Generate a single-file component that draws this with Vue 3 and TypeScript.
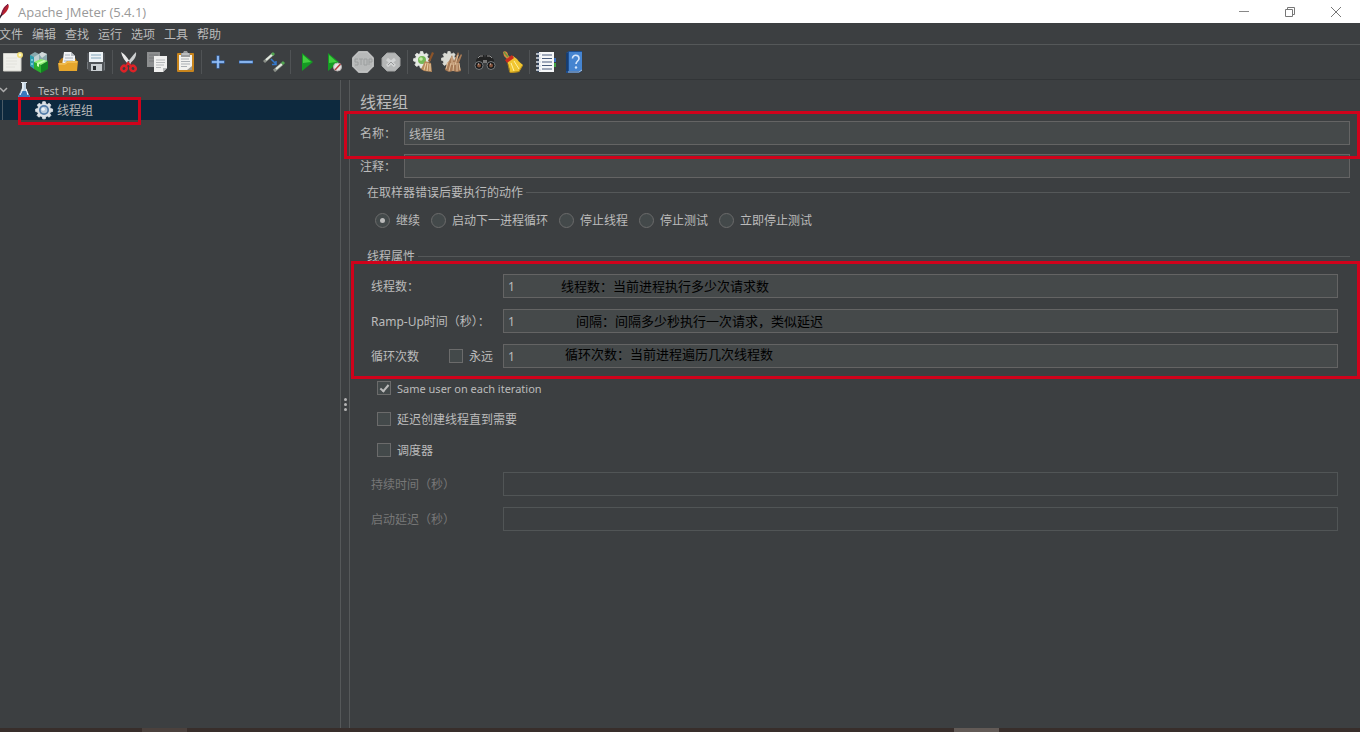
<script setup lang="ts">
import { ref } from 'vue'

interface Tool {
  label: string
  art: string
}

const menus = ['文件', '编辑', '查找', '运行', '选项', '工具', '帮助']

const gear =
  '<path d="M10.500 2h3l.6 2.600 1.800.8 2.300-1.400 2.100 2.100-1.400 2.300.8 1.800 2.600.6v3l-2.600.6-.8 1.800 1.400 2.300-2.100 2.100-2.300-1.400-1.800.8-.6 2.600h-3l-.6-2.600-1.800-.8-2.300 1.400-2.100-2.100 1.400-2.300-.8-1.800L2 13.800v-3l2.600-.6.8-1.800L4 6.100 6.100 4l2.300 1.400 1.800-.8z"/>'

const toolGroups: Tool[][] = [
  [
    {
      label: '新建',
      art: '<path d="M3.500 3.500h17.500V21h-17.500z" fill="#efefea" stroke="#d2d2cc"/><path d="M6 8h11M6 11h11M6 14h11M6 17h9" stroke="#e2e2dc"/><circle cx="20" cy="5" r="3" fill="#f2df79"/><circle cx="20" cy="5" r="1.400" fill="#fffbd0"/>'
    },
    {
      label: '模板',
      art: '<path d="M2 5l5-3 4 2 3-2 5 2v8l-9 6-8-4z" fill="#8aa9ad"/><path d="M2 5l4 2v12l-4-3z" fill="#2f9fae"/><path d="M6 7l5-3v6l-5 3z" fill="#c0d0d0"/><path d="M11 4l3-2 5 2-5 4z" fill="#d3dada"/><path d="M4 9v8" stroke="#bdf3f6" stroke-dasharray="2 2"/><path d="M6 12l7-3 7 2-7 4z" fill="#8cf06c"/><path d="M6 12l7 3v8l-7-4z" fill="#2bb02e"/><path d="M13 15l7-4v8l-7 4z" fill="#128420"/><path d="M9 13l7-3 2 1-7 3v3l-2-1z" fill="#c9ffb4"/>'
    },
    {
      label: '打开',
      art: '<path d="M3 11l3-3h13l2 3v9H3z" fill="#b97a16"/><path d="M8 2h7l4 4v10H6z" fill="#f1f3f5"/><path d="M15 2v4h4z" fill="#b9bec4"/><path d="M9 5h5M9 8h8M8 11h9" stroke="#a8b2bd"/><path d="M2 13h7l2-2h11l-1 10H3z" fill="#e6a62c"/><path d="M3 14h6.500l2-2H21" stroke="#f8cf70" fill="none"/>'
    },
    {
      label: '保存',
      art: '<path d="M3 3h18v18H5l-2-2z" fill="#505458"/><path d="M5 2h14v10H5z" fill="#eef3f6"/><path d="M7 5h10M7 8h10" stroke="#83a6bb"/><path d="M7 14h11v7H7z" fill="#c9ced1"/><path d="M9 16h3v4H9z" fill="#282c2f"/><path d="M3.500 12v7M20.500 12v8" stroke="#73787c"/>'
    }
  ],
  [
    {
      label: '剪切',
      art: '<path d="M4 2c1 5 4 9 8 13l2-2C11 9 8 4 4 2z" fill="#e8e8e8"/><path d="M19 2c1 5-3 9-8 13l-1-2c3-4 6-8 9-11z" fill="#cccfd0"/><circle cx="11.500" cy="12" r="1" fill="#555"/><ellipse cx="7" cy="18.500" rx="2.600" ry="2.800" transform="rotate(35 7 18.500)" fill="none" stroke="#dc2227" stroke-width="2.400"/><ellipse cx="16" cy="18.500" rx="2.600" ry="2.800" transform="rotate(-35 16 18.500)" fill="none" stroke="#dc2227" stroke-width="2.400"/><path d="M9 16l2-3 3 3" fill="none" stroke="#dc2227" stroke-width="2"/>'
    },
    {
      label: '复制',
      art: '<path d="M2 2h13v15H2z" fill="#8d8f90"/><path d="M4 5h9M4 8h9M4 11h9" stroke="#747778"/><path d="M9 6h13v12l-4 4H9z" fill="#f0f0ef"/><path d="M22 18h-4v4z" fill="#b7b9ba"/><path d="M11 10h9M11 12.500h9M11 15h8M11 17.500h5" stroke="#b5b8ba"/>'
    },
    {
      label: '粘贴',
      art: '<rect x="4" y="3" width="17" height="19" rx="1" fill="#c8851d"/><path d="M6 5h13v15H6z" fill="#f2f2ef"/><path d="M19 16v4h-5z" fill="#9b9c99"/><path d="M8 9h8M8 11.500h9M8 14h9M8 16.500h6" stroke="#abb0b4"/><path d="M8 3h2l1-2h3l1 2h2v4H8z" fill="#9a9c9d"/><path d="M9 4h7" stroke="#dcdedf"/>'
    }
  ],
  [
    { label: '展开全部', art: '<path d="M12 5.500v13M5.500 12h13" stroke="#3975c9" stroke-width="3"/><path d="M12 6v12M6 12h12" stroke="#9cc4f6" stroke-width="1.600"/>' },
    { label: '折叠全部', art: '<path d="M5 12h14" stroke="#3975c9" stroke-width="3"/><path d="M5.500 12h13" stroke="#9cc4f6" stroke-width="1.600"/>' },
    {
      label: '切换',
      art: '<path d="M2 12l9-8" stroke="#8b9089" stroke-width="3"/><path d="M4 10l7-6" stroke="#e2e9df" stroke-width="2"/><path d="M10 5l2-2" stroke="#52a651" stroke-width="3"/><path d="M12 21l8-7" stroke="#8b9089" stroke-width="3"/><path d="M14 19l6-5" stroke="#e2e9df" stroke-width="2"/><path d="M20 14l2-2" stroke="#52a651" stroke-width="3"/><path d="M9 9l5 5M14 11v3.500H10" fill="none" stroke="#3478ca" stroke-width="1.500"/>'
    }
  ],
  [
    { label: '启动', art: '<path d="M7 3l11 9L7 21z" fill="#159b24"/><path d="M8 5l8 7-8 1z" fill="#42cf3f"/>' },
    { label: '不停顿启动', art: '<path d="M5 3l11 9L5 21z" fill="#159b24"/><path d="M6 5l8 7-8 1z" fill="#42cf3f"/><circle cx="14.500" cy="17" r="4" fill="#e4e4e4" stroke="#b8b1b1"/><path d="M12 20l5.500-6" stroke="#b33c3c" stroke-width="1.500"/>' },
    { label: '停止', art: '<path d="M7.500 1h9L23 7.500v9L16.500 23h-9L1 16.500v-9z" fill="#acaeae"/><path d="M8 2h8l6 6v8l-6 6H8l-6-6V8z" fill="#b7b9b9" stroke="#c4c6c6"/><g stroke="#9b9e9e" fill="none"><path d="M7 9H4v3h3v3H4M8 9h4M10 9v6M13 9h3v6h-3zM18 15V9h3v3h-3"/></g>' },
    { label: '关闭', art: '<path d="M8 3h8l5 5v8l-5 5H8l-5-5V8z" fill="#b5b7b7" stroke="#a3a5a5"/><path d="M8 9l8 7M16 9l-8 7" stroke="#d2d4d4" stroke-width="3"/><path d="M9 15l3-3 3 3" stroke="#969898" fill="none"/>' }
  ],
  [
    {
      label: '清除',
      art: '<g fill="#e6e9e4" stroke="#e6e9e4" transform="scale(.8)">' + gear + '</g><circle cx="10" cy="10" r="4" fill="#75b957"/><circle cx="9" cy="9" r="1.800" fill="#c4e9a5"/><path d="M20 2l2 1-4 9-2-1z" fill="#8c5429"/><path d="M13 11l6 2 1 9-8-1-3-2z" fill="#b98a5b"/><path d="M14 13l-2 7M16 13l-1 8M18 14v7" stroke="#ecd0a6"/>'
    },
    {
      label: '清除全部',
      art: '<g fill="#dadbd4" stroke="#dadbd4" transform="scale(.75)">' + gear + '</g><path d="M9 11l3-6 2 6 4-9 1 2-2 7 4-7 1 1-3 8 2 8-4 1-4-1-4 1-4-2 2-7z" fill="#a87b56"/><path d="M8 12l-2 7M11 13l-2 8M14 12l-1 9M17 13v8M19 13l1 7M12 7v8M18 5l-3 10" stroke="#dfc09c"/>'
    }
  ],
  [
    {
      label: '查找',
      art: '<path d="M3 10l4-5h4l1 3 1-3h4l4 5v7h-7v-5h-4v5H3z" fill="#222323"/><path d="M5 8l2-2h3M14 6h3l2 2" stroke="#929292" fill="none"/><path d="M10 10h4v3h-4z" fill="#777"/><circle cx="6" cy="15.500" r="4" fill="#151719" stroke="#777b7d"/><circle cx="18" cy="15.500" r="4" fill="#151719" stroke="#777b7d"/><circle cx="6" cy="15.500" r="2" fill="#82523a"/><circle cx="18" cy="15.500" r="2" fill="#82523a"/><path d="M5 14h1M17 14h1" stroke="#ddd"/>'
    },
    {
      label: '重置查找',
      art: '<path d="M2 2c2-2 5 0 5 3l3 3-3 2-4-4z" fill="#da8742"/><path d="M3 2l4 5" stroke="#6b9c3b" stroke-width="1.500"/><path d="M6 11l6-5 4 3c2 3 4 4 6 6l-4 7-9 1C9 19 7 15 6 11z" fill="#f1c631"/><path d="M4 10l7-5 2 3-7 5z" fill="#c92c1e"/><path d="M10 13l3 8M13 11l5 8" stroke="#fff0a0"/><path d="M7 14c1 4 1 6 2 8.500l9-1 3.500-6" stroke="#b48918" fill="none"/>'
    }
  ],
  [
    {
      label: '函数助手',
      art: '<path d="M4 2h16v20H4z" fill="#f5f7f8"/><path d="M4 2v20" stroke="#33435a" stroke-width="2"/><path d="M2 4h5M2 8h5M2 12h5M2 16h5M2 20h5" stroke="#d9e0e8" stroke-width="1.500"/><path d="M8 5h10M8 8.500h10M8 12h10M8 15.500h10M8 19h10" stroke="#4a5d7c" stroke-width="1.200"/><path d="M20 8h2v4h-2z" fill="#3b72c1"/><path d="M20 13h2v4h-2z" fill="#40a544"/>'
    },
    {
      label: '帮助',
      art: '<path d="M4 3l3-2h13v20l-3 2H4z" fill="#1c4e91"/><path d="M7 2h13v19H7z" fill="#4584d0"/><path d="M6 22h11l3-2" stroke="#a9c0d8" fill="none"/><path d="M5 3v18" stroke="#163866" stroke-width="1.500"/><path d="M10.500 8.500C10.500 4 17 4.500 17 8.500c0 2.500-3 2.500-3 5.500" fill="none" stroke="#d5e6fb" stroke-width="1.600"/><circle cx="14" cy="17.500" r="1.200" fill="#d5e6fb"/>'
    }
  ]
]

const errorActions = ['继续', '启动下一进程循环', '停止线程', '停止测试', '立即停止测试']
const errorAction = ref('继续')

const groupName = ref('线程组')
const comment = ref('')
const threads = ref('1')
const rampUp = ref('1')
const loops = ref('1')
const forever = ref(false)
const sameUser = ref(true)
const delayCreate = ref(false)
const scheduler = ref(false)
</script>

<template>
  <div class="window">
    <header class="titlebar">
      <svg class="feather" width="12" height="22" viewBox="0 0 12 22" aria-hidden="true">
        <path d="M8 3c2 2 0 7-5 11l-2 1c0-5 3-10 7-12z" fill="#b8202d" />
        <path d="M8 3C5 6 3 9 1 15" stroke="#632054" fill="none" />
        <path d="M2 13l-3 5" stroke="#302030" stroke-width="1.500" />
      </svg>
      <span class="title">Apache JMeter (5.4.1)</span>
      <button class="win" aria-label="最小化">
        <svg width="12" height="12" viewBox="0 0 12 12"><path d="M1 5.500h10" stroke="#888" /></svg>
      </button>
      <button class="win" aria-label="还原">
        <svg width="12" height="12" viewBox="0 0 12 12" fill="none" stroke="#777"><path d="M1.500 3.500h7v7h-7zM3.500 3V1.500h7v7H9" /></svg>
      </button>
      <button class="win" aria-label="关闭窗口">
        <svg width="12" height="12" viewBox="0 0 12 12"><path d="M1 1l10 10M11 1L1 11" stroke="#777" /></svg>
      </button>
    </header>

    <nav class="menubar">
      <button v-for="m in menus" :key="m">{{ m }}</button>
    </nav>

    <div class="toolbar" role="toolbar">
      <div v-for="(group, i) in toolGroups" :key="i" class="tool-group">
        <button v-for="t in group" :key="t.label" :aria-label="t.label">
          <svg width="24" height="24" viewBox="0 0 24 24" v-html="t.art"></svg>
        </button>
      </div>
    </div>

    <div class="body">
      <aside class="tree">
        <div class="node">
          <svg width="8" height="8" viewBox="0 0 8 8"><path d="M0 2l3.500 3.500L7 2" fill="none" stroke="#adadad" stroke-width="1.500" /></svg>
          <svg class="node-icon" width="16" height="18" viewBox="0 0 16 18">
            <path d="M6 1h4v6l4 9H2l4-9z" fill="#c3d5e5" />
            <path d="M5 10h6l3 6H2z" fill="#3a78bd" />
            <path d="M7 2v6l-3 6M10 8l2 6" stroke="#fff" fill="none" />
            <path d="M5 1.500h6" stroke="#dfe8ee" />
          </svg>
          <span class="text latin">Test Plan</span>
        </div>
        <div class="node selected">
          <svg class="gear" width="20" height="20" viewBox="0 0 24 24">
            <g fill="#dce1e6" stroke="#dce1e6" v-html="gear"></g>
            <circle cx="12" cy="12" r="6" fill="#527ba7" />
            <circle cx="12" cy="12" r="4" fill="#b9cbdc" />
            <circle cx="11" cy="11" r="2" fill="#eef4fa" />
          </svg>
          <span class="text">线程组</span>
          <i class="mark mark-node"></i>
        </div>
      </aside>

      <div class="splitter"><i></i><i></i><i></i></div>

      <main class="pane">
        <h1>线程组</h1>
        <div class="line name-line">
          <label class="text" for="name">名称：</label>
          <input id="name" v-model="groupName" type="text" />
          <i class="mark mark-name"></i>
        </div>
        <div class="line">
          <label class="text" for="comment">注释：</label>
          <input id="comment" v-model="comment" type="text" />
        </div>

        <fieldset class="actions">
          <legend class="text">在取样器错误后要执行的动作</legend>
          <div class="radios">
            <label v-for="a in errorActions" :key="a" class="check">
              <input v-model="errorAction" type="radio" name="on-error" :value="a" /><span class="text">{{ a }}</span>
            </label>
          </div>
        </fieldset>

        <fieldset class="props">
          <legend class="text">线程属性</legend>
          <div class="fields">
            <div class="field">
              <label class="text" for="threads">线程数：</label>
              <input id="threads" v-model="threads" type="text" />
              <span class="note note-threads">线程数：当前进程执行多少次请求数</span>
            </div>
            <div class="field">
              <label class="text" for="ramp">Ramp-Up时间（秒）：</label>
              <input id="ramp" v-model="rampUp" type="text" />
              <span class="note note-ramp">间隔：间隔多少秒执行一次请求，类似延迟</span>
            </div>
            <div class="field">
              <div class="loop-label">
                <label class="text" for="loops">循环次数</label>
                <label class="check"><input v-model="forever" type="checkbox" /><span class="text">永远</span></label>
              </div>
              <input id="loops" v-model="loops" type="text" />
              <span class="note note-loops">循环次数：当前进程遍历几次线程数</span>
            </div>
            <i class="mark mark-fields"></i>
          </div>
          <div class="checks">
            <label class="check"><input v-model="sameUser" type="checkbox" /><span class="text latin">Same user on each iteration</span></label>
            <label class="check"><input v-model="delayCreate" type="checkbox" /><span class="text">延迟创建线程直到需要</span></label>
            <label class="check"><input v-model="scheduler" type="checkbox" /><span class="text">调度器</span></label>
          </div>
          <div class="fields">
            <div class="field off">
              <label class="text" for="duration">持续时间（秒）</label>
              <input id="duration" type="text" disabled />
            </div>
            <div class="field off">
              <label class="text" for="delay">启动延迟（秒）</label>
              <input id="delay" type="text" disabled />
            </div>
          </div>
        </fieldset>
      </main>
    </div>

    <footer class="desktop-edge"><i></i><i></i></footer>
  </div>
</template>

<style>
body {
  margin: 0;
  background: #3c3f41;
}
</style>

<style scoped>
.window {
  display: flex;
  flex-direction: column;
  min-height: 100vh;
  overflow: hidden;
  background: #3c3f41;
  color: #bbb;
  font: 12px/16px "Noto Sans", "Noto Sans CJK SC", sans-serif;
}
button {
  padding: 0;
  border: 0;
  background: none;
  color: inherit;
  font: inherit;
}
svg {
  display: block;
  flex: none;
}
.text {
  padding-top: 2px;
}
.latin {
  font-size: 11px;
}
.titlebar {
  display: flex;
  align-items: center;
  height: 23px;
  padding-right: 1px;
  box-sizing: border-box;
  background: #fff;
  color: #999;
  font: 13px/22px "Open Sans", sans-serif;
}
.title {
  flex: 1;
  padding-left: 6px;
}
.win {
  display: grid;
  place-items: center;
  width: 46px;
  height: 22px;
}
.menubar {
  display: flex;
  gap: 9px;
  height: 21px;
  margin-left: -1px;
  border-bottom: 1px solid #555859;
}
.menubar button {
  padding-top: 2px;
  white-space: nowrap;
}
.toolbar {
  display: flex;
  height: 34px;
  margin-left: -2px;
  border-bottom: 1px solid #323537;
}
.tool-group {
  display: flex;
  align-items: center;
}
.tool-group + .tool-group::before {
  content: "";
  width: 1px;
  height: 24px;
  margin: 0 2px;
  background: #505355;
}
.tool-group button {
  display: grid;
  place-items: center;
  width: 28px;
  height: 28px;
}
.body {
  display: flex;
  flex: 1;
}
.tree {
  flex: 0 0 25%;
}
.node {
  position: relative;
  display: flex;
  align-items: center;
  height: 20px;
}
.node-icon {
  margin: 0 6px 0 8px;
}
.selected {
  background: #0d293e;
}
.selected::before {
  content: "";
  width: 1px;
  height: 20px;
  margin-left: 2px;
  background: #4b5b66;
}
.gear {
  margin: 0 3px 0 31px;
}
.splitter {
  display: flex;
  flex: none;
  flex-direction: column;
  align-items: center;
  justify-content: center;
  gap: 2px;
  width: 8px;
  border: solid #555859;
  border-width: 0 1px;
}
.splitter i {
  width: 3px;
  height: 3px;
  border-radius: 50%;
  background: #b4b4b4;
}
.pane {
  flex: 1;
  min-width: 0;
  padding: 12px 10px 0;
}
h1 {
  margin: 0 0 9px;
  font-size: 16px;
  font-weight: 400;
  line-height: 20px;
}
.line {
  position: relative;
  display: flex;
  align-items: center;
  height: 24px;
}
.name-line {
  margin-bottom: 9px;
}
.line label {
  flex: 0 0 44px;
}
input {
  box-sizing: border-box;
  margin: 0;
  border: 1px solid #646464;
  background: #45494a;
  color: inherit;
  font: inherit;
}
input[type="text"] {
  flex: 1;
  min-width: 0;
  height: 24px;
  padding: 0 4px;
}
.line input[type="text"] {
  padding-top: 2px;
}
input[type="checkbox"],
input[type="radio"] {
  display: grid;
  flex: none;
  place-items: center;
  width: 14px;
  height: 14px;
  border-color: #6b6b6b;
  background: #43494a;
  appearance: none;
}
input[type="radio"] {
  width: 15px;
  height: 15px;
  border-radius: 50%;
}
input[type="radio"]:checked::after {
  content: "";
  width: 5px;
  height: 5px;
  border-radius: 50%;
  background: #bbb;
}
input[type="checkbox"]:checked::after {
  content: "";
  width: 3px;
  height: 7px;
  margin-bottom: 2px;
  border: solid #bbb;
  border-width: 0 2px 2px 0;
  transform: rotate(40deg);
}
fieldset {
  min-width: 0;
  margin: 0 0 0 4px;
  padding: 0;
  border: 0;
  border-top: 1px solid #555859;
}
legend {
  padding: 2px 3px 0;
}
.actions {
  margin-top: 5px;
}
.props {
  margin-top: 18px;
}
.radios {
  display: flex;
  gap: 11px;
  padding: 10px 0 0 11px;
}
.check {
  display: flex;
  align-items: center;
  gap: 6px;
}
.fields {
  position: relative;
  display: flex;
  flex-direction: column;
  gap: 11px;
  margin: 0 12px 0 7px;
}
legend + .fields {
  margin-top: 9px;
}
.field {
  position: relative;
  display: flex;
  align-items: center;
}
.field > :first-child {
  flex: 0 0 132px;
}
.loop-label {
  display: flex;
  justify-content: space-between;
  box-sizing: border-box;
  padding-right: 10px;
}
.checks {
  display: flex;
  flex-direction: column;
  align-items: flex-start;
  gap: 13px;
  padding: 11px 13px 13px;
}
.off {
  color: #777;
}
.off input {
  border-color: #515556;
  background: #3c3f41;
}
.note {
  position: absolute;
  top: 4px;
  color: #000;
  font-size: 13px;
  white-space: nowrap;
  pointer-events: none;
}
.note-threads {
  left: 190px;
}
.note-ramp {
  left: 205px;
}
.note-loops {
  top: 2px;
  left: 194px;
}
.mark {
  position: absolute;
  z-index: 1;
  border: 3px solid #d0021b;
  pointer-events: none;
}
.mark-node {
  top: -3px;
  left: 18px;
  width: 117px;
  height: 22px;
}
.mark-name {
  inset: -10px -10px -14px -16px;
}
.mark-fields {
  inset: -13px -22px -11px -20px;
}
.desktop-edge {
  display: flex;
  height: 4px;
  background: #382e2b;
}
.desktop-edge i {
  width: 45px;
  margin-left: 142px;
  background: #4b413d;
}
.desktop-edge i + i {
  margin-right: 361px;
  margin-left: auto;
  background: #625a56;
}
</style>
